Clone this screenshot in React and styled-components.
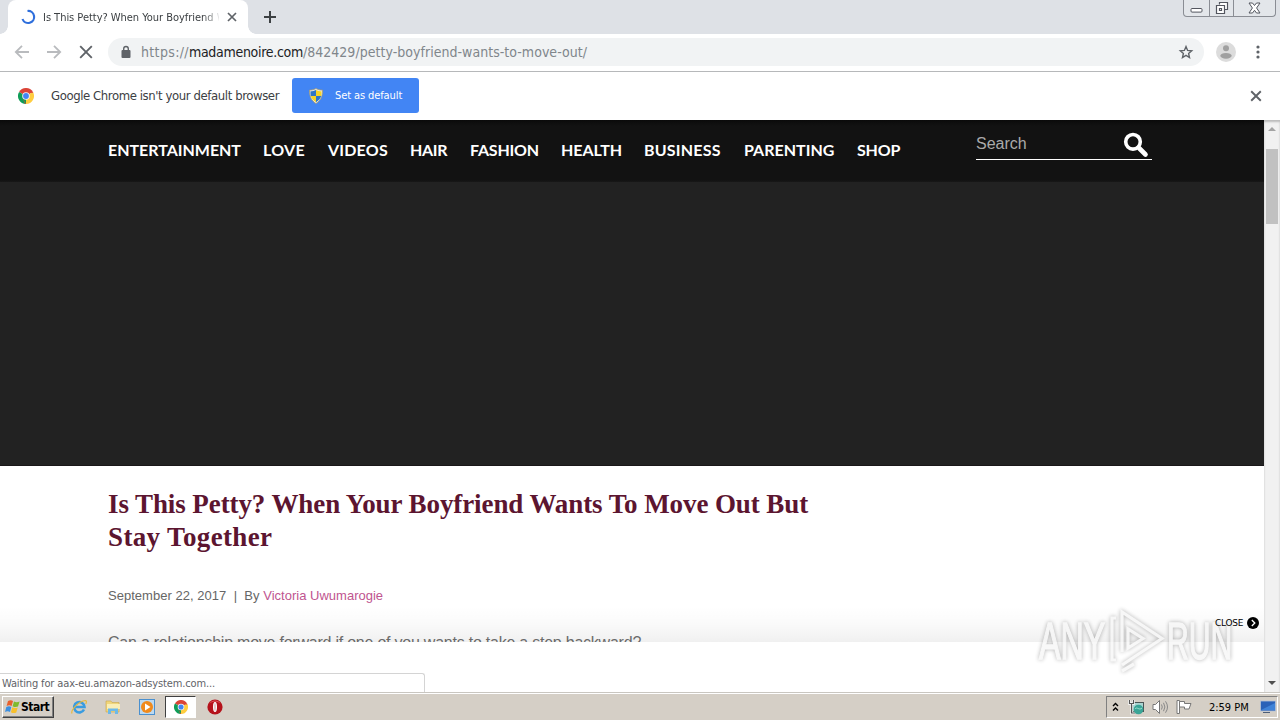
import React from 'react';
import styled, { createGlobalStyle } from 'styled-components';

const ui = '"DejaVu Sans Condensed", "DejaVu Sans", sans-serif';
const arial = '"Liberation Sans", Arial, sans-serif';

const Global = createGlobalStyle`
  * { box-sizing: border-box; }
  body { margin: 0; overflow: hidden; background: #fff; }
  svg { display: block; flex: none; }
`;

const Desktop = styled.div`
  width: 1280px; height: 720px; display: flex; flex-direction: column;
  font-family: ${ui}; overflow: hidden; background: #fff;
`;

const Label = styled.span`
  white-space: pre;
  letter-spacing: ${p => p.$ls || 0}px;
`;

/* browser chrome */
const TabStrip = styled.div`
  height: 34px; flex: none; background: #dee1e6; display: flex; align-items: flex-start;
  padding-left: 8px;
`;
const Tab = styled.div`
  width: 240px; height: 34px; background: #fff; border-radius: 8px 8px 0 0;
  display: flex; align-items: center; padding: 0 10px 0 12px; position: relative;
  &::before, &::after {
    content: ''; position: absolute; bottom: 0; width: 8px; height: 8px;
  }
  &::before { left: -8px; background: radial-gradient(circle at 0 0, #dee1e6 7.5px, #fff 8px); }
  &::after { right: -8px; background: radial-gradient(circle at 100% 0, #dee1e6 7.5px, #fff 8px); }
`;
const TabTitle = styled.div`
  margin-left: 7px; width: 176px; overflow: hidden; font-size: 11px; color: #3c4043; line-height: 16px;
  padding-top: 1px;
  white-space: nowrap; mask-image: linear-gradient(90deg, #000 160px, transparent 178px);
`;
const TabClose = styled.div` margin-left: 8px; `;
const NewTab = styled.div` margin: 10px 0 0 15px; `;
const WindowButtons = styled.div`
  margin-left: auto; margin-right: 4px; height: 17px; width: 93px; display: flex;
  border: 1px solid #8a8d94; border-top: 0; border-radius: 0 0 4px 4px; background: #e3e6ea;
`;
const WindowButton = styled.div`
  width: ${p => p.$w}px; display: flex; align-items: center; justify-content: center;
  border-left: ${p => (p.$first ? 0 : 1)}px solid #8a8d94;
`;

const Toolbar = styled.div`
  height: 38px; flex: none; display: flex; align-items: center; background: #fff;
  border-bottom: 1px solid #b6b8ba; padding: 0 17px 2px 14px;
`;
const NavButtons = styled.div` display: flex; gap: 16px; width: 94px; `;
const Omnibox = styled.div`
  flex: 1; height: 28px; border-radius: 14px; background: #f1f3f4; display: flex; align-items: center;
  padding: 0 10px 0 12px;
`;
const Url = styled.div`
  flex: 1; margin-left: 9px; font-size: 14px; color: #80868b; white-space: pre; line-height: 20px;
  b { font-weight: 400; color: #202124; }
`;
const Avatar = styled.div` margin: 0 17px 0 12px; `;

const InfoBar = styled.div`
  height: 48px; flex: none; display: flex; align-items: center; padding: 0 18px 1px; background: #fff;
  font-size: 13px; color: #3c4043;
`;
const InfoText = styled.div` margin-left: 17px; width: 241px; `;
const DefaultButton = styled.div`
  width: 127px; height: 35px; border-radius: 3px; background: #4285f4; color: #fff; font-size: 11px;
  display: flex; align-items: center; padding-left: 17px; gap: 12px;
`;
const InfoClose = styled.div` margin-left: auto; `;

/* page */
const Viewport = styled.div`
  height: 572px; flex: none; display: flex; position: relative; overflow: hidden;
`;
const Page = styled.div` width: 1264px; height: 572px; overflow: hidden; background: #fff; `;
const SiteHeader = styled.div`
  height: 62px; padding: 0 112px 0 108px; display: flex; justify-content: space-between;
  background: linear-gradient(#0a0a0a, #121212 6px, #121212 60px, #181818);
`;
const SiteNav = styled.nav`
  display: flex; padding-top: 19px; font-family: Lato, sans-serif; font-weight: 700;
  font-size: 16px; line-height: 21px; color: #fff;
`;
const SiteLink = styled.a` width: ${p => p.$w}px; white-space: nowrap; letter-spacing: ${p => p.$ls}px; `;
const SearchBox = styled.div`
  width: 176px; height: 40px; border-bottom: 1px solid #fff; display: flex; align-items: flex-start;
  justify-content: space-between; padding: 12px 3px 0 0; color: #aaa;
  font: 16px/23px ${arial};
`;
const Hero = styled.div` height: 284px; background: #222; border-bottom: 1px solid #1a1719; `;
const Article = styled.article` padding: 22px 0 0 108px; font-family: ${arial}; `;
const Headline = styled.h1`
  margin: 0; font: 700 27px/33px "Liberation Serif", serif; color: #5c1530;
`;
const Byline = styled.div`
  margin-top: 32px; height: 20px; font-size: 13px; line-height: 20px; color: #666; white-space: pre;
  a { color: #c0558f; }
`;
const Paragraph = styled.p` margin: 24px 0 0; font-size: 16px; line-height: 26px; color: #707070; `;

const AdFooter = styled.div`
  position: absolute; left: 0; bottom: 0; width: 1264px; height: 50px; background: #fff;
`;
const AdShade = styled.div`
  position: absolute; left: 0; bottom: 50px; width: 1264px; height: 36px;
  background: linear-gradient(rgba(0,0,0,0), rgba(0,0,0,.02) 50%, rgba(0,0,0,.06));
`;
const CloseAd = styled.div`
  position: absolute; left: 1215px; top: 496px; display: flex; align-items: center; gap: 4px; height: 14px;
  font: 9px/14px "DejaVu Sans", sans-serif; color: #000;
`;
const StatusBubble = styled.div`
  position: absolute; left: 0; bottom: 0; width: 425px; height: 19px; background: #fff; color: #5f6368;
  border: 1px solid #d4d4d4; border-left: 0; border-bottom: 0; border-radius: 0 3px 0 0;
  font-size: 11px; line-height: 19px; padding-left: 2px;
`;
const Watermark = styled.div`
  position: absolute; left: 1039px; top: 487px; display: flex; align-items: center; height: 68px;
  font: 400 52px/68px "Liberation Sans", sans-serif; color: #f6f6f6; -webkit-text-stroke: 1.4px #f6f6f6;
  filter: drop-shadow(0 0 2px rgba(0,0,0,.4)); opacity: .75;
`;
const MarkWord = styled.span`
  width: ${p => p.$w}px; display: inline-block;
  span { display: inline-block; transform-origin: 0 50%; transform: scaleX(${p => p.$sx}); }
`;
const ScrollTrack = styled.div`
  width: 16px; height: 572px; background: #f1f1f1; display: flex; flex-direction: column; align-items: center;
  box-shadow: inset 0 2px 2px #bbb;
`;
const ScrollArrow = styled.div`
  height: ${p => p.$h}px; display: flex; align-items: center; padding-bottom: ${p => p.$pb || 0}px;
`;
const ScrollThumb = styled.div` width: 12px; height: 75px; background: #c1c1c1; margin-bottom: auto; `;

/* taskbar */
const Taskbar = styled.div`
  height: 28px; flex: none; background: #d5cfc6; border-top: 1px solid #c9c6c0; box-shadow: inset 0 1px #fff;
  display: flex; align-items: center; padding: 3px 2px 2px 2px; color: #000; font-size: 11px;
`;
const StartButton = styled.div`
  width: 52px; height: 22px; display: flex; align-items: center; padding-left: 1px;
  border: 1px solid; border-color: #fff #404040 #404040 #fff; box-shadow: inset -1px -1px #808080;
  font: 700 12px/18px ${ui};
`;
const QuickLaunch = styled.div` display: flex; align-items: center; margin-left: 17px; gap: 18px; `;
const ActiveTask = styled.div`
  width: 31px; height: 22px; background: #fff; border: 1px solid; border-color: #404040 #fff #fff #404040;
  display: flex; align-items: center; justify-content: center; margin: 0 -7px 0 -8px;
`;
const Tray = styled.div`
  margin-left: auto; width: 172px; height: 22px; display: flex; align-items: center; padding-left: 5px;
  border: 1px solid; border-color: #808080 #fff #fff #808080;
`;
const TrayIcons = styled.div` display: flex; gap: 7px; margin-left: 9px; `;
const Clock = styled.span` width: 41px; margin: 0 10px 0 16px; white-space: nowrap; letter-spacing: -.02px; `;

const Cross = ({ s = 10, c = '#5f6368', w = 1.8 }) => (
  <svg width={s} height={s} viewBox="0 0 10 10"><path d="M1 1l8 8M9 1l-8 8" stroke={c} strokeWidth={w} /></svg>
);
const Chrome = ({ s = 16 }) => (
  <svg width={s} height={s} viewBox="0 0 16 16">
    <path d="M8 8L1.07 4A8 8 0 0 1 14.93 4z" fill="#db4437" />
    <path d="M8 8L14.93 4A8 8 0 0 1 8 16z" fill="#ffcd40" />
    <path d="M8 8v8A8 8 0 0 1 1.07 4z" fill="#0f9d58" />
    <path d="M8 4.2h6.9L15.3 5H8zM4.6 9.8l3.4 6.2-.9 0z" fill="#db4437" />
    <path d="M11.3 9.9L8 16l3-7z" fill="#ffcd40" />
    <circle cx="8" cy="8" r="3.8" fill="#f4f4f4" /><circle cx="8" cy="8" r="2.9" fill="#4285f4" />
  </svg>
);
const Shield = () => (
  <svg width="14" height="16" viewBox="0 0 14 16">
    <path d="M7 .5c2 1.2 4 1.6 6.5 1.6C13.6 8 12 12.5 7 15.5 2 12.5.4 8 .5 2.1 3 2.1 5 1.7 7 .5z" fill="#e9edf2" stroke="#a79b6b" strokeWidth=".8" />
    <path d="M7 2v6H1.8C1.5 6.5 1.4 5 1.5 3.2 3.5 3.2 5.2 2.9 7 2z" fill="#2e75c8" />
    <path d="M7 2v6h5.2c.3-1.5.4-3 .3-4.8C10.5 3.2 8.8 2.9 7 2z" fill="#f5d327" />
    <path d="M7 8v6.2C4.2 12.5 2.5 10.5 1.8 8z" fill="#f5d327" />
    <path d="M7 8v6.2c2.8-1.7 4.5-3.7 5.2-6.2z" fill="#2e75c8" />
  </svg>
);

const links = [
  ['ENTERTAINMENT', 155, -0.02], ['LOVE', 65, 0.3], ['VIDEOS', 82, 0.2], ['HAIR', 60, -0.3], ['FASHION', 91, -0.2],
  ['HEALTH', 83, -0.05], ['BUSINESS', 100, 0.2], ['PARENTING', 113, 0.02], ['SHOP', 46, -0.2],
];

export default function App() {
  return (
    <Desktop>
      <Global />
      <TabStrip>
        <Tab>
          <svg width="16" height="16" viewBox="0 0 16 16"><path d="M7.500 2a6 6 0 1 1-5 8" fill="none" stroke="#2f6fdc" strokeWidth="2.200" /></svg>
          <TabTitle><Label $ls={-0.03}>Is This Petty? When Your Boyfriend W</Label></TabTitle>
          <TabClose><Cross s={10} w={1.7} /></TabClose>
        </Tab>
        <NewTab><svg width="14" height="14" viewBox="0 0 14 14"><path d="M7 1v12M1 7h12" stroke="#3c4043" strokeWidth="2" /></svg></NewTab>
        <WindowButtons>
          <WindowButton $w={25} $first>
            <svg width="13" height="16" viewBox="0 0 13 16"><rect x="1" y="8.500" width="11" height="3.600" rx="1" fill="#fff" stroke="#53565f" /></svg>
          </WindowButton>
          <WindowButton $w={25}>
            <svg width="14" height="14" viewBox="0 0 14 14"><path d="M4.500 3.500v-2h8v7h-3M1.500 4.500h8v8h-8zM4.500 7.500h2v2h-2z" fill="#fff" stroke="#53565f" strokeWidth="1.200" /></svg>
          </WindowButton>
          <WindowButton $w={42}>
            <svg width="13" height="12" viewBox="0 0 13 12"><path d="M1 1h3.500l2 2.500 2-2.500H12L8.600 6l3.400 5H8.500l-2-2.700-2 2.700H1l3.400-5z" fill="#fff" stroke="#53565f" /></svg>
          </WindowButton>
        </WindowButtons>
      </TabStrip>

      <Toolbar>
        <NavButtons>
          {['M15 8H2M8 1.800L1.800 8 8 14.200', 'M1 8h13M8 1.800L14.200 8 8 14.200'].map(d => (
            <svg key={d} width="16" height="16" viewBox="0 0 16 16"><path d={d} fill="none" stroke="#b9bbbe" strokeWidth="1.800" /></svg>
          ))}
          <svg width="16" height="16" viewBox="0 0 16 16"><path d="M2.200 2.200l11.600 11.600M13.800 2.200L2.200 13.800" stroke="#5f6368" strokeWidth="1.900" /></svg>
        </NavButtons>
        <Omnibox>
          <svg width="12" height="14" viewBox="0 0 12 14"><rect x="1.500" y="5" width="9" height="8" rx="1" fill="#5f6368" /><path d="M3.700 5.500V3.800a2.300 2.300 0 0 1 4.600 0v1.700" fill="none" stroke="#5f6368" strokeWidth="1.400" /></svg>
          <Url><Label $ls={0.35}>https://</Label><b><Label $ls={-0.3}>madamenoire.com</Label></b><Label $ls={0.03}>/842429/petty-boyfriend-wants-to-move-out/</Label></Url>
          <svg width="16" height="16" viewBox="0 0 16 16"><path d="M8 2.600l1.600 3.800 4.100.4-3.100 2.700.9 4L8 11.400l-3.500 2.100.9-4L2.300 6.800l4.100-.4z" fill="none" stroke="#5f6368" strokeWidth="1.400" /></svg>
        </Omnibox>
        <Avatar>
          <svg width="20" height="20" viewBox="0 0 20 20"><circle cx="10" cy="10" r="10" fill="#dcdcdc" /><circle cx="10" cy="6.300" r="3" fill="#a0a0a0" /><ellipse cx="10" cy="13.800" rx="5.700" ry="2.900" fill="#a0a0a0" /></svg>
        </Avatar>
        <svg width="10" height="14" viewBox="0 0 10 14"><g fill="#5f6368"><circle cx="5" cy="2" r="1.600" /><circle cx="5" cy="7" r="1.600" /><circle cx="5" cy="12" r="1.600" /></g></svg>
      </Toolbar>

      <InfoBar>
        <Chrome s={16} />
        <InfoText><Label $ls={-0.41}>Google Chrome isn't your default browser</Label></InfoText>
        <DefaultButton><Shield /><Label $ls={-0.1}>Set as default</Label></DefaultButton>
        <InfoClose><Cross s={12} w={1.6} /></InfoClose>
      </InfoBar>

      <Viewport>
        <Page>
          <SiteHeader>
            <SiteNav>{links.map(([t, w, ls]) => <SiteLink key={t} $w={w} $ls={ls}>{t}</SiteLink>)}</SiteNav>
            <SearchBox>
              <Label>Search</Label>
              <svg width="26" height="26" viewBox="0 0 26 26"><circle cx="10" cy="9.800" r="7.300" fill="none" stroke="#fff" strokeWidth="3.600" /><path d="M16 16l6.500 6.500" stroke="#fff" strokeWidth="4.600" strokeLinecap="round" /></svg>
            </SearchBox>
          </SiteHeader>
          <Hero />
          <Article>
            <Headline><Label $ls={-0.09}>Is This Petty? When Your Boyfriend Wants To Move Out But</Label><br /><Label $ls={0.36}>Stay Together</Label></Headline>
            <Byline><Label $ls={0.03}>September 22, 2017  |  By </Label><a><Label $ls={0.01}>Victoria Uwumarogie</Label></a></Byline>
            <Paragraph><Label $ls={-0.23}>Can a relationship move forward if one of you wants to take a step backward?</Label></Paragraph>
          </Article>
        </Page>
        <ScrollTrack>
          <ScrollArrow $h={29} $pb={11}><svg width="8" height="4" viewBox="0 0 8 4"><path d="M0 4l4-4 4 4z" fill="#a3a3a3" /></svg></ScrollArrow>
          <ScrollThumb />
          <ScrollArrow $h={18}><svg width="8" height="4" viewBox="0 0 8 4"><path d="M0 0l4 4 4-4z" fill="#505050" /></svg></ScrollArrow>
        </ScrollTrack>
        <AdShade />
        <AdFooter />
        <Watermark>
          <MarkWord $w={68} $sx={0.62}><span>ANY</span></MarkWord>
          <svg width="60" height="66" viewBox="0 0 60 66"><path d="M9 10H5v42h4M15 44V4l40 26.500-40 26.500M21 21v19l15-9.500zM15 63l12-7" fill="none" stroke="#f6f6f6" strokeWidth="3.200" /></svg>
          <MarkWord $w={67} $sx={0.58}><span>RUN</span></MarkWord>
        </Watermark>
        <CloseAd>
          <Label $ls={-0.25}>CLOSE</Label>
          <svg width="12" height="12" viewBox="0 0 12 12"><circle cx="6" cy="6" r="6" fill="#000" /><path d="M4.800 3l3 3-3 3" fill="none" stroke="#fff" strokeWidth="1.300" /></svg>
        </CloseAd>
        <StatusBubble><Label $ls={-0.14}>Waiting for aax-eu.amazon-adsystem.com...</Label></StatusBubble>
      </Viewport>

      <Taskbar>
        <StartButton>
          <svg width="17" height="16" viewBox="0 0 17 16">
            <path d="M4 2c2-1.200 3.600-1 5 0L7.600 7C6 6 4.500 6 2.600 7z" fill="#e8602c" />
            <path d="M10 2.500c2 1 3.600.8 5.600 0L14 7.600c-2 .8-3.600.6-5.400-.4z" fill="#7fba2c" />
            <path d="M2.300 8c2-1 3.500-1 5 0L6 13c-1.600-1-3.200-1-5 0z" fill="#3b8fe0" />
            <path d="M8.300 8.300c1.900 1 3.400 1 5.400.2l-1.400 5c-2 .9-3.600.7-5.400-.3z" fill="#f8c02c" />
          </svg>
          <Label $ls={-0.5}>Start</Label>
        </StartButton>
        <QuickLaunch>
          <svg width="16" height="16" viewBox="0 0 16 16"><path d="M13 10.500A5.200 5.200 0 1 1 13.500 8H4" fill="none" stroke="#3a9ce0" strokeWidth="2.600" /><path d="M1 14.500C-.5 11 8 2 14.500 1.500c1.500.2.800 2.500.2 3.500" fill="none" stroke="#e8b93c" strokeWidth="1.200" /></svg>
          <svg width="16" height="16" viewBox="0 0 16 16"><path d="M1 2h5l1 1.500h7V13H1z" fill="#f0d67b" stroke="#c9a64a" strokeWidth=".6" /><path d="M2 5h13v5H2z" fill="#faeeb5" /><path d="M3 15V9.500h10V15h-3v-3H6v3z" fill="#6db9e8" /></svg>
          <svg width="16" height="16" viewBox="0 0 16 16"><rect x=".5" y=".5" width="15" height="15" fill="#bcd9f0" stroke="#4a90cf" /><circle cx="8" cy="8" r="6" fill="#f08a1c" /><path d="M6 4.500v7L11.500 8z" fill="#fff" /></svg>
          <ActiveTask><Chrome s={14} /></ActiveTask>
          <svg width="16" height="16" viewBox="0 0 16 16"><circle cx="8" cy="8" r="7.600" fill="#b5121b" /><path d="M2.500 4.500A6.500 6.500 0 0 1 13.500 4.500 9 9 0 0 0 2.500 4.500z" fill="#e0555a" /><ellipse cx="8" cy="8" rx="2" ry="5" fill="#fff" /><ellipse cx="8" cy="8" rx=".7" ry="4" fill="#d9b0b0" /></svg>
        </QuickLaunch>
        <Tray>
          <svg width="7" height="10" viewBox="0 0 7 10"><path d="M1 4l2.500-2.500L6 4M1 8.500L3.500 6 6 8.500" fill="none" stroke="#000" strokeWidth="1.400" /></svg>
          <TrayIcons>
            <svg width="17" height="16" viewBox="0 0 17 16"><rect x="4.500" y="3.500" width="11" height="9" fill="#a9d5d2" stroke="#4a5555" /><path d="M1.500 1v3.500h4V1M3.500 5v9h4" fill="none" stroke="#fff" strokeWidth="2.600" /><path d="M1.500 1v3.500h4V1M3.500 5v9h4" fill="none" stroke="#555" strokeWidth="1.200" /><circle cx="10.500" cy="10.500" r="4.800" fill="#3aa597" /><path d="M7 10c2-3 4 2 7-1" stroke="#9be0d0" fill="none" /></svg>
            <svg width="17" height="16" viewBox="0 0 17 16"><path d="M1 5.500h2.500L7.500 1.500v13l-4-4H1z" fill="#fff" stroke="#777" /><path d="M9.500 5.500q1.500 2.500 0 5M11.500 3.800q2.800 4.200 0 8.400M13.500 2.300q4 5.700 0 11.400" fill="none" stroke="#888" /></svg>
            <svg width="17" height="16" viewBox="0 0 17 16"><path d="M1 1.500h2.500v13H1z" fill="#fff" stroke="#777" /><path d="M3.500 2.500h5v2H15l-2 5.500H8.500v-2h-5z" fill="#fff" stroke="#777" /></svg>
          </TrayIcons>
          <Clock>2:59 PM</Clock>
          <svg width="16" height="14" viewBox="0 0 16 14"><rect x=".5" y="1" width="15" height="10" fill="#2a62b8" stroke="#b5c4d8" strokeWidth=".8" /><path d="M1 10L15 3v7z" fill="#3f83d8" /><path d="M3 12.500h7" stroke="#4c5d77" /></svg>
        </Tray>
      </Taskbar>
    </Desktop>
  );
}
